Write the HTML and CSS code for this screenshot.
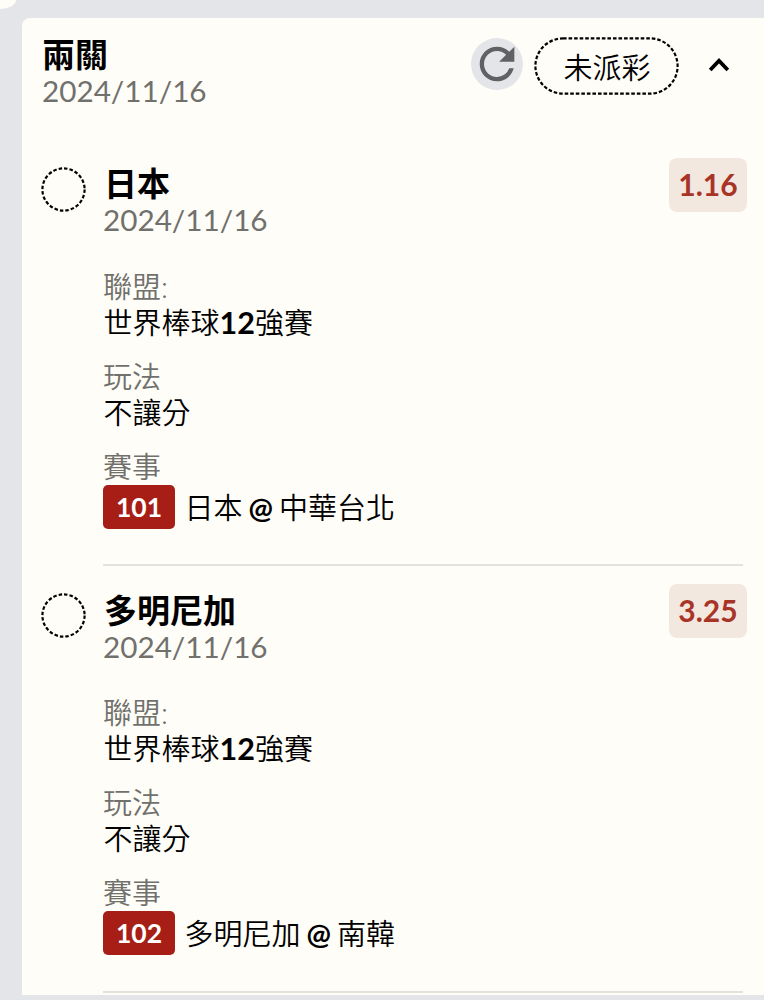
FILE: index.html
```html
<!DOCTYPE html>
<html lang="zh-Hant">
<head>
<meta charset="utf-8">
<title>投注紀錄</title>
<link rel="stylesheet" href="styles.css">
</head>
<body>
<div class="page">
  <div class="previous-card"></div>
  <main class="card">
    <header class="card-header">
      <div>
        <h1 class="title">兩關</h1>
        <div class="date">2024/11/16</div>
      </div>
      <div class="actions">
        <button class="refresh" aria-label="refresh">
          <svg width="52" height="52" viewBox="0 0 24 24"><path d="M17.65 6.35A7.958 7.958 0 0 0 12 4c-4.42 0-7.99 3.58-7.99 8s3.57 8 7.99 8c3.73 0 6.84-2.55 7.73-6h-2.08A5.99 5.99 0 0 1 12 18c-3.31 0-6-2.69-6-6s2.69-6 6-6c1.66 0 3.14.69 4.22 1.78L13 11h7V4l-2.35 2.35z" fill="#5f6163"/></svg>
        </button>
        <span class="status">
          <svg class="status-outline" width="145" height="58" viewBox="0 0 145 58"><rect x="1.4" y="1.4" width="142.2" height="55.2" rx="27.6" fill="none" stroke="#000" stroke-width="2.2" stroke-dasharray="3.6 1.95"/></svg>
          未派彩
        </span>
        <svg class="chevron" width="22" height="16" viewBox="0 0 22 16"><path d="M2.2 13 11 3.8 19.8 13" fill="none" stroke="#000" stroke-width="3.8"/></svg>
      </div>
    </header>
    <section class="bet">
      <svg class="marker" width="46" height="46" viewBox="0 0 46 46"><circle cx="22.5" cy="22.5" r="21.1" fill="none" stroke="#000" stroke-width="2.2" stroke-dasharray="3.5 2.02"/></svg>
      <div class="details">
        <div class="bet-header">
          <div>
            <h2 class="title">日本</h2>
            <div class="date">2024/11/16</div>
          </div>
          <span class="odds">1.16</span>
        </div>
        <dl class="fields">
          <div class="field"><dt>聯盟:</dt><dd>世界棒球<b class="count">12</b>強賽</dd></div>
          <div class="field"><dt>玩法</dt><dd>不讓分</dd></div>
          <div class="field"><dt>賽事</dt><dd class="match"><span class="number">101</span><span class="teams">日本<b class="at">@</b>中華台北</span></dd></div>
        </dl>
      </div>
    </section>
    <section class="bet">
      <svg class="marker" width="46" height="46" viewBox="0 0 46 46"><circle cx="22.5" cy="22.5" r="21.1" fill="none" stroke="#000" stroke-width="2.2" stroke-dasharray="3.5 2.02"/></svg>
      <div class="details">
        <div class="bet-header">
          <div>
            <h2 class="title">多明尼加</h2>
            <div class="date">2024/11/16</div>
          </div>
          <span class="odds">3.25</span>
        </div>
        <dl class="fields">
          <div class="field"><dt>聯盟:</dt><dd>世界棒球<b class="count">12</b>強賽</dd></div>
          <div class="field"><dt>玩法</dt><dd>不讓分</dd></div>
          <div class="field"><dt>賽事</dt><dd class="match"><span class="number">102</span><span class="teams">多明尼加<b class="at">@</b>南韓</span></dd></div>
        </dl>
      </div>
    </section>
  </main>
</div>
</body>
</html>
```
FILE: styles.css
```css
* { box-sizing: border-box; }
body {
  margin: 0;
  background: #e4e5e8;
  color: #000;
  font: 29px/36px Lato, "Noto Sans CJK TC", sans-serif;
}
.page { height: 1000px; overflow: hidden; }
.previous-card {
  width: 16px;
  height: 9px;
  background: #fffdf7;
  border-bottom-right-radius: 16px 9px;
}
.card {
  height: 977px;
  margin: 9px 0 0 22px;
  padding: 18px 17px 0 19px;
  background: #fffdf7;
  border-top-left-radius: 8px;
  overflow: hidden;
}
.card-header { display: flex; justify-content: space-between; height: 121px; padding-left: 1px; }
.title { margin: 0; padding-left: 1px; font-size: 33px; line-height: 36px; font-weight: 700; }
.card-header .title { padding-left: 0; }
.date { font-size: 29.7px; line-height: 38px; color: #70706d; }
.actions { display: flex; align-items: flex-start; padding-right: 17px; }
.refresh {
  width: 52px;
  height: 52px;
  margin: 2px 11px 0 0;
  padding: 0;
  border: 0;
  border-radius: 50%;
  background: #e4e5e8;
}
.refresh svg { display: block; }
.status { position: relative; width: 145px; height: 58px; margin: 1px 29px 0 0; padding-left: 1px; line-height: 61px; text-align: center; font-weight: 350; }
.status-outline { position: absolute; inset: 0; }
.chevron { margin-top: 21px; }
.bet { display: flex; gap: 16px; height: 426.5px; }
.marker { flex: none; margin-top: 9.5px; }
.details { flex: 1; height: 409px; position: relative; }
.details::after { content: ""; position: absolute; left: 0; right: 4px; bottom: 0; height: 2px; background: #e5e2dc; }
.bet-header { display: flex; justify-content: space-between; height: 111.5px; padding-top: 8px; }
.odds {
  width: 78px;
  height: 54px;
  margin-top: -7.5px;
  border-radius: 8px;
  background: #f3e8df;
  color: #a83428;
  font-size: 30px;
  font-weight: 700;
  line-height: 53px;
  text-align: center;
}
.fields { display: grid; gap: 18px; margin: 0; font-weight: 350; }
dt { color: #70706d; }
dd { margin: 0; padding-left: 0.5px; }
.count { font-size: 30.5px; line-height: 1; font-weight: 700; }
.match { display: flex; align-items: center; gap: 9.5px; padding-left: 0; }
.teams { padding-top: 2px; }
.number {
  width: 72px;
  height: 44px;
  border-radius: 5px;
  background: #a61e16;
  color: #fff;
  font-size: 26.5px;
  font-weight: 700;
  line-height: 45px;
  text-align: center;
}
.at { margin: 0 6px; font-weight: 700; }
```
